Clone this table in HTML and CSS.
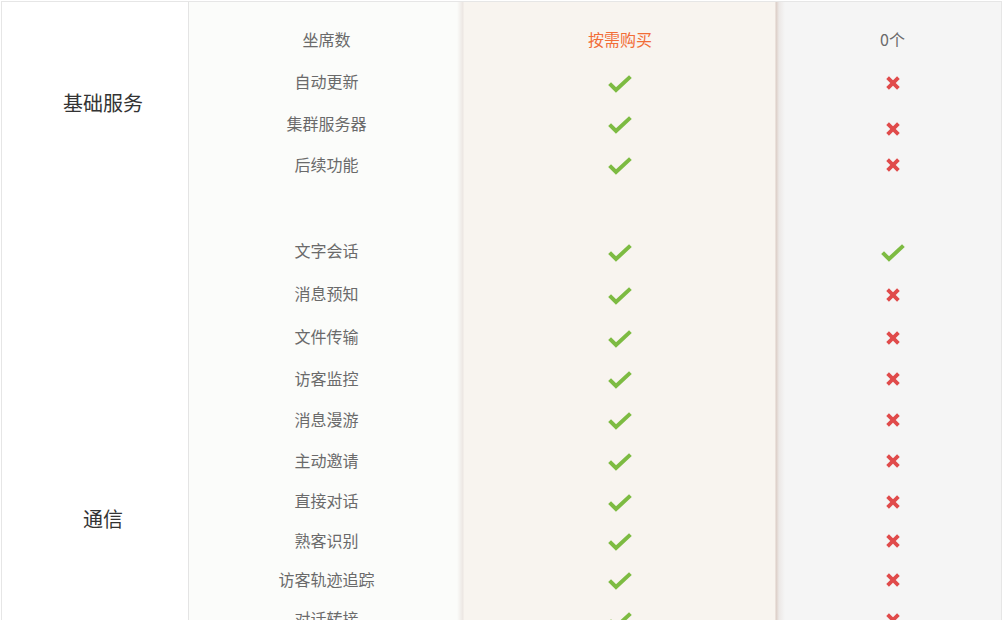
FILE: index.html
```html
<!DOCTYPE html>
<html lang="zh-CN">
<head>
<meta charset="utf-8">
<title>功能对比</title>
<link rel="stylesheet" href="styles.css">
</head>
<body>
<svg width="0" height="0" class="defs" aria-hidden="true">
  <symbol id="ok" viewBox="0 0 24 18"><polyline points="1.6,8.6 8,15 22.4,1.6" fill="none" stroke="#7dbb42" stroke-width="4"/></symbol>
  <symbol id="no" viewBox="0 0 14 14"><path d="M1.6 1.6 L12.4 12.4 M12.4 1.6 L1.6 12.4" fill="none" stroke="#e04b4b" stroke-width="3.8"/></symbol>
</svg>
<div class="table">
  <section class="sec sec-basic">
    <div class="label">基础服务</div>
    <div class="rows">
      <div class="row h43"><div class="c name">坐席数</div><div class="c"><span class="buy">按需购买</span></div><div class="c free"><span class="num">0个</span></div></div>
      <div class="row h42"><div class="c name">自动更新</div><div class="c"><svg class="ok"><use href="#ok"/></svg></div><div class="c free"><svg class="no"><use href="#no"/></svg></div></div>
      <div class="row"><div class="c name">集群服务器</div><div class="c"><svg class="ok"><use href="#ok"/></svg></div><div class="c free"><svg class="no down"><use href="#no"/></svg></div></div>
      <div class="row"><div class="c name">后续功能</div><div class="c"><svg class="ok"><use href="#ok"/></svg></div><div class="c free"><svg class="no"><use href="#no"/></svg></div></div>
    </div>
  </section>
  <section class="sec sec-comm">
    <div class="label">通信</div>
    <div class="rows">
      <div class="row h42"><div class="c name">文字会话</div><div class="c"><svg class="ok"><use href="#ok"/></svg></div><div class="c free"><svg class="ok"><use href="#ok"/></svg></div></div>
      <div class="row h44"><div class="c name">消息预知</div><div class="c"><svg class="ok"><use href="#ok"/></svg></div><div class="c free"><svg class="no"><use href="#no"/></svg></div></div>
      <div class="row h42"><div class="c name">文件传输</div><div class="c"><svg class="ok"><use href="#ok"/></svg></div><div class="c free"><svg class="no"><use href="#no"/></svg></div></div>
      <div class="row"><div class="c name">访客监控</div><div class="c"><svg class="ok"><use href="#ok"/></svg></div><div class="c free"><svg class="no"><use href="#no"/></svg></div></div>
      <div class="row"><div class="c name">消息漫游</div><div class="c"><svg class="ok"><use href="#ok"/></svg></div><div class="c free"><svg class="no"><use href="#no"/></svg></div></div>
      <div class="row"><div class="c name">主动邀请</div><div class="c"><svg class="ok"><use href="#ok"/></svg></div><div class="c free"><svg class="no"><use href="#no"/></svg></div></div>
      <div class="row h40"><div class="c name">直接对话</div><div class="c"><svg class="ok"><use href="#ok"/></svg></div><div class="c free"><svg class="no"><use href="#no"/></svg></div></div>
      <div class="row h39"><div class="c name">熟客识别</div><div class="c"><svg class="ok"><use href="#ok"/></svg></div><div class="c free"><svg class="no"><use href="#no"/></svg></div></div>
      <div class="row h39"><div class="c name">访客轨迹追踪</div><div class="c"><svg class="ok"><use href="#ok"/></svg></div><div class="c free"><svg class="no"><use href="#no"/></svg></div></div>
      <div class="row h40"><div class="c name">对话转接</div><div class="c"><svg class="ok"><use href="#ok"/></svg></div><div class="c free"><svg class="no"><use href="#no"/></svg></div></div>
      <div class="row h40"><div class="c name">离线留言</div><div class="c"><svg class="ok"><use href="#ok"/></svg></div><div class="c free"><svg class="no"><use href="#no"/></svg></div></div>
      <div class="row h40"><div class="c name">智能分配</div><div class="c"><svg class="ok"><use href="#ok"/></svg></div><div class="c free"><svg class="no"><use href="#no"/></svg></div></div>
      <div class="row h40"><div class="c name">快捷回复</div><div class="c"><svg class="ok"><use href="#ok"/></svg></div><div class="c free"><svg class="no"><use href="#no"/></svg></div></div>
      <div class="row h40"><div class="c name">满意度评价</div><div class="c"><svg class="ok"><use href="#ok"/></svg></div><div class="c free"><svg class="no"><use href="#no"/></svg></div></div>
    </div>
  </section>
</div>
</body>
</html>
```
FILE: styles.css
```css
* { box-sizing: border-box; }

html, body {
  margin: 0;
  padding: 0;
  background: #ffffff;
}

body {
  font-family: "Noto Sans CJK SC", "Noto Sans", "Liberation Sans", sans-serif;
  overflow: hidden;
}

.defs {
  position: absolute;
  width: 0;
  height: 0;
}

.table {
  margin: 1px 0 0 1px;
  width: 1001px;
  border: 1px solid #e6e6e6;
  border-bottom: none;
  display: flex;
  flex-direction: column;
}

.sec {
  display: flex;
}

.label {
  width: 187px;
  flex: none;
  border-right: 1px solid #e4e4e4;
  background: #ffffff;
  display: flex;
  align-items: center;
  justify-content: center;
  padding-left: 16px;
  padding-bottom: 4px;
  font-size: 20px;
  line-height: 1;
  color: #333333;
}

.rows {
  width: 812px;
  display: flex;
  flex-direction: column;
  background: linear-gradient(to right,
    #fbfcfa 0,
    #fbfcfa 268px,
    #ece6e2 274px,
    #f8f4ef 275px,
    #f8f4ef 586px,
    #dccdc6 587px,
    #ece8e6 590px,
    #f5f5f5 596px,
    #f5f5f5 100%);
}

.sec-basic .rows {
  padding: 19px 0 20px;
}

.sec-comm .rows {
  padding: 25px 0 32px;
}

.row {
  height: 41px;
  display: grid;
  grid-template-columns: 275px 312px 225px;
}

.row.h39 { height: 39px; }
.row.h40 { height: 40px; }
.row.h42 { height: 42px; }
.row.h43 { height: 43px; }
.row.h44 { height: 44px; }

.c {
  display: flex;
  align-items: center;
  justify-content: center;
  line-height: 1;
}

.c.free {
  padding-left: 8px;
}

.name {
  font-size: 16px;
  color: #6a6a6a;
  padding-bottom: 8px;
}

.buy {
  font-size: 16px;
  color: #f26d37;
  margin-top: -8px;
}

.num {
  font-size: 16px;
  color: #6a6a6a;
  margin-top: -8px;
}

.ok {
  width: 24px;
  height: 18px;
  margin-top: -3px;
}

.no {
  width: 14px;
  height: 14px;
  margin-top: -5px;
}

.no.down {
  margin-top: 4px;
}
```
